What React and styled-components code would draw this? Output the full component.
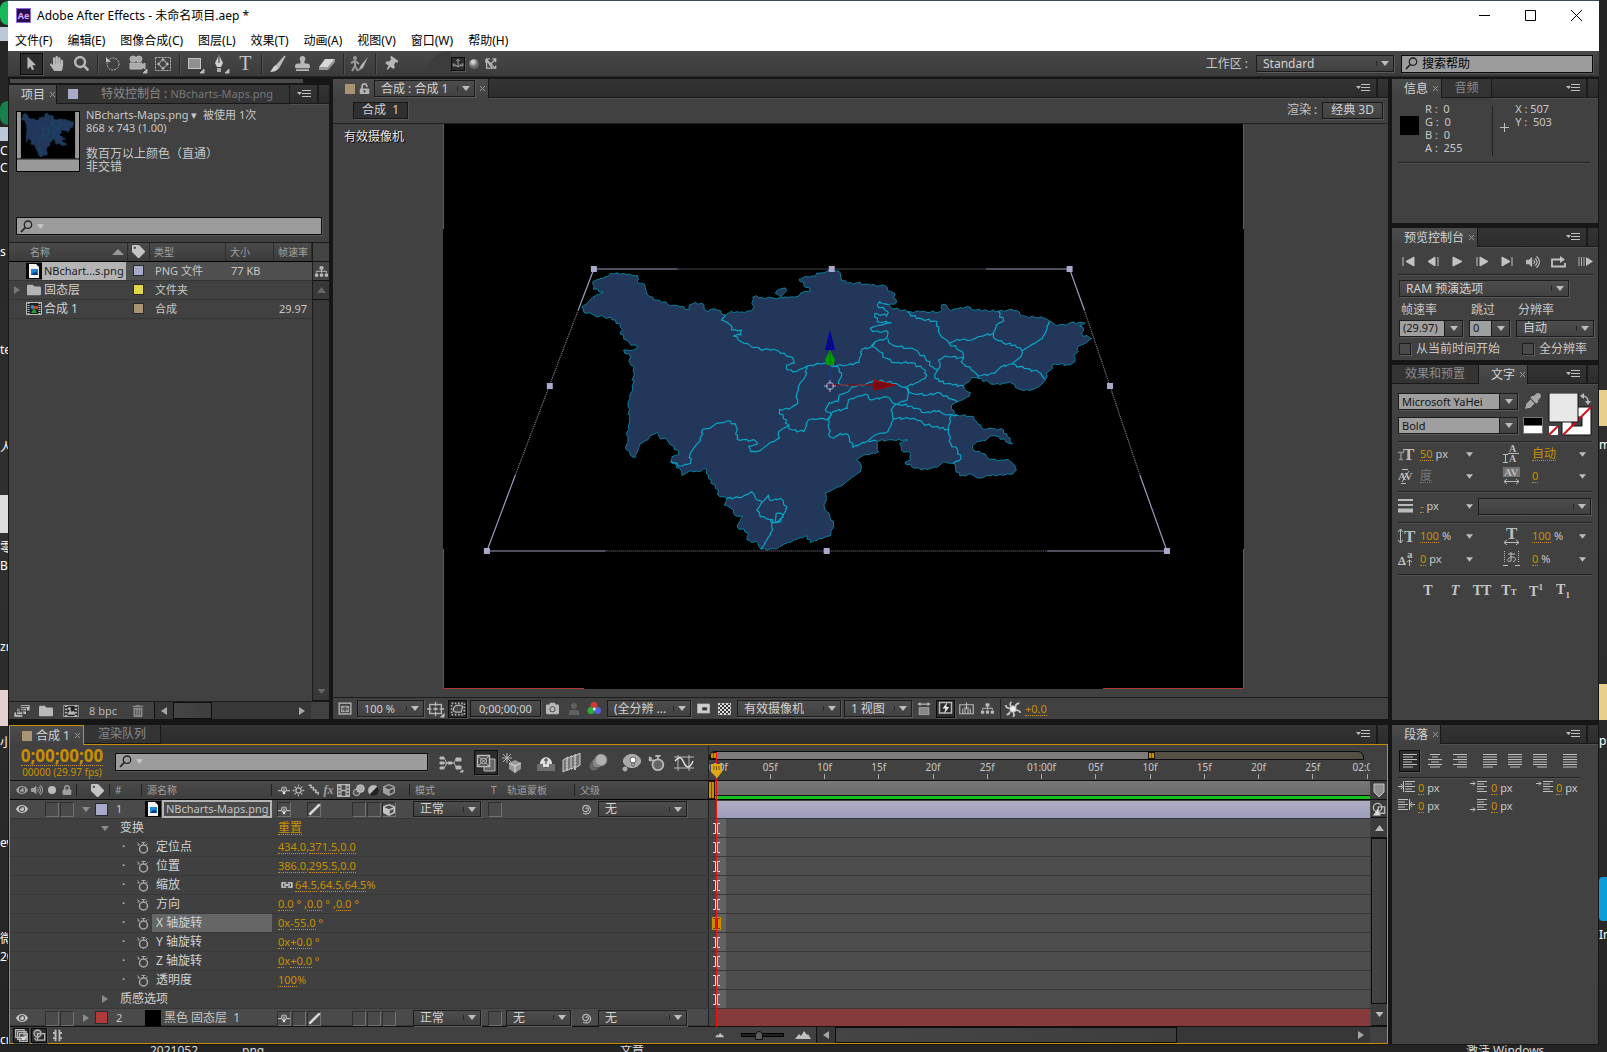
import styled, {createGlobalStyle, css} from 'styled-components'
import {
  FaCamera, FaCube, FaEraser, FaEye, FaEyeDropper, FaFolder, FaHandPaper, FaLock,
  FaMousePointer, FaPaintBrush, FaSearch, FaSitemap, FaStamp, FaTag, FaThumbtack,
  FaTrashAlt, FaUnlockAlt, FaUser, FaVolumeUp,
} from 'react-icons/fa'

const GlobalStyle = createGlobalStyle`
  * { box-sizing: border-box; }
  body { margin: 0; background: #292929; }
  body, button, input, select {
    font-family: "Noto Sans", "Noto Sans CJK SC", sans-serif;
    font-size: 11px;
    line-height: 14px;
    color: #c8c8c8;
  }
  button, input, select { margin: 0; padding: 0; border: 0; border-radius: 0; background: none; }
  svg { display: block; flex: none; }
`

const gold = '#c89000'
const raised = 'linear-gradient(#4d4d4d, #414141)'

// ---------- desktop and window ----------

const Desktop = styled.div`
  display: grid;
  grid-template-columns: 8px minmax(0, 1fr) 8px;
  grid-template-rows: minmax(0, 1fr) 7px;
  height: 100vh;
  overflow: hidden;
  background: linear-gradient(#232323, #303030 50%, #242424);
`

const Edge = styled.div`
  display: flex;
  flex-direction: column;
  overflow: hidden;
  color: #fff;
  font-size: 12px;
  white-space: nowrap;
`

const EdgeItem = styled.span`
  flex: none;
  height: ${p => p.$h || 18}px;
  margin-top: ${p => p.$gap}px;
  background: ${p => p.$bg || 'none'};
  border-radius: ${p => p.$round || 0};
`

const EdgeBottom = styled.div`
  grid-column: 1 / -1;
  display: grid;
  grid-template-columns: 150px 92px 378px 846px 1fr;
  overflow: hidden;
  color: #ddd;
  font-size: 12px;
  line-height: 12px;
  white-space: nowrap;
`

const Window = styled.main`
  display: flex;
  flex-direction: column;
  min-width: 0;
  border-top: 1px solid #3a4a50;
  background: #161616;
`

const TitleBar = styled.header`
  display: flex;
  align-items: center;
  height: 29px;
  padding: 0 8px;
  gap: 6px;
  background: #fff;
  color: #000;
  font-size: 12px;
`

const AppBadge = styled.span`
  width: 15px;
  height: 15px;
  border: 1px solid #8f6fd8;
  background: #2a0b4b;
  color: #d5a6ff;
  font-size: 9px;
  font-weight: bold;
  line-height: 13px;
  text-align: center;
`

const WindowButtons = styled.div`
  display: flex;
  gap: 35px;
  margin-left: auto;
  padding-right: 9px;
`

const PlainButton = styled.button`
  display: flex;
  align-items: center;
  justify-content: center;
  color: inherit;
`

const MenuBar = styled.nav`
  display: flex;
  align-items: center;
  height: 21px;
  padding: 0 7px;
  gap: 15px;
  background: #fff;

  button { color: #000; font-size: 12px; }
`

// ---------- shared controls ----------

const DropBox = styled.div`
  display: flex;
  align-items: center;
  flex: ${p => (p.$w ? 'none' : 1)};
  width: ${p => (p.$w ? p.$w + 'px' : 'auto')};
  height: ${p => p.$h || 17}px;
  border: 1px solid #1c1c1c;
  box-shadow: 1px 1px 0 #5a5a5a;
  background: ${raised};
  min-width: 0;

  select {
    appearance: none;
    flex: 1;
    min-width: 0;
    height: 100%;
    padding-left: ${p => (p.$light ? 3 : 6)}px;
    color: ${p => (p.$light ? '#161616' : '#d2d2d2')};
    background: ${p => (p.$light ? '#9f9f9f' : 'none')};
    border-right: ${p => (p.$light ? '1px solid #1c1c1c' : 0)};
    font-size: ${p => p.$font || 12}px;
  }
`

const ArrowCell = styled.span`
  display: flex;
  justify-content: center;
  flex: none;
  width: 17px;
  border-left: ${p => (p.$light ? 0 : '1px solid #262626')};
`

const Down = ({w = 8, fill = '#bdbdbd'}) => (
  <svg width={w} height="5" viewBox="0 0 8 5"><path d="M0 0h8L4 5z" fill={fill} /></svg>
)

const Side = ({fill = '#a8a8a8', left}) => (
  <svg width="6" height="8" viewBox="0 0 6 8"><path d={left ? 'M6 0v8L0 4z' : 'M0 0v8l6-4z'} fill={fill} /></svg>
)

const Drop = ({value, label, w, h, light, font}) => (
  <DropBox $w={w} $h={h} $light={light} $font={font}>
    <select aria-label={label} defaultValue={value}><option>{value}</option></select>
    <ArrowCell $light={light}><Down /></ArrowCell>
  </DropBox>
)

const SearchBox = styled.label`
  display: flex;
  align-items: center;
  flex: ${p => (p.$w ? 'none' : 1)};
  width: ${p => (p.$w ? p.$w + 'px' : 'auto')};
  height: 18px;
  margin: ${p => p.$margin || 0};
  padding-left: 3px;
  gap: 4px;
  border: 1px solid #0c0c0c;
  box-shadow: 1px 1px 0 #555;
  background: #9c9c9c;

  input { flex: 1; min-width: 0; color: #000; font-size: 12px; }
  input::placeholder { color: #000; opacity: 1; }
`

const Lens = () => (
  <svg width="13" height="13" viewBox="0 0 13 13" fill="none" stroke="#222">
    <circle cx="8" cy="4.7" r="3.7" strokeWidth="1.3" /><path d="M5.3 7.5L1 12" strokeWidth="1.8" />
  </svg>
)

const Search = ({label, placeholder, arrow, w, margin}) => (
  <SearchBox $w={w} $margin={margin}>
    <Lens />
    {arrow && <Down fill="#c8c8c8" w={7} />}
    <input aria-label={label} placeholder={placeholder} />
  </SearchBox>
)

const Value = styled.button`
  color: ${p => (p.$dim ? '#777' : gold)};
  border-bottom: 1px dotted ${p => (p.$dim ? '#777' : gold)};
  font-size: ${p => p.$size || 11}px;
  line-height: 13px;
`

const IconButton = styled.button`
  display: flex;
  flex: none;
  align-items: center;
  justify-content: center;
  width: ${p => p.$w || 22}px;
  height: ${p => p.$h || 18}px;
  color: #b8b8b8;
  ${p => p.$on && css`
    border: 1px solid #0c0c0c;
    background: #2c2c2c;
    box-shadow: 1px 1px 0 #555;
  `}
`

const Swatch = styled.span`
  flex: none;
  width: ${p => p.$s || 10}px;
  height: ${p => p.$s || 10}px;
  background: ${p => p.$c};
  border: ${p => (p.$edge ? '1px solid #2a2a2a' : 0)};
  border-radius: ${p => (p.$round ? '50%' : 0)};
`

const Grip = styled.span`
  flex: none;
  width: 4px;
  height: 11px;
  background-image: radial-gradient(circle, #7c7c7c 30%, transparent 40%);
  background-size: 2px 2px;
`

// ---------- panels ----------

const Panel = styled.section`
  display: flex;
  flex-direction: column;
  min-width: 0;
  flex: ${p => (p.$grow ? 1 : 'none')};
  height: ${p => (p.$h ? p.$h + 'px' : 'auto')};
  min-height: 0;
  background: #414141;
`

const TabStrip = styled.div`
  display: flex;
  flex: none;
  height: 19px;
  background: linear-gradient(#343434, #2c2c2c);
`

const Tab = styled.div`
  display: flex;
  align-items: center;
  flex: none;
  gap: ${p => p.$gap || 4}px;
  width: ${p => (p.$w ? p.$w + 'px' : 'auto')};
  padding: 0 4px;
  white-space: nowrap;
  font-size: 12px;
  color: ${p => (p.$on ? '#d4d4d4' : '#8c8c8c')};
  background: ${p => (p.$on ? 'linear-gradient(#4c4c4c, #414141)' : '#343434')};
  border: solid #191919;
  border-width: 0 1px 0 0;
  border-bottom-width: ${p => (p.$on ? 0 : 1)}px;
  ${p => p.$active && css`
    border: 1px solid ${gold};
    border-bottom: 0;
    margin-bottom: -1px;
    z-index: 1;
  `}
`

const TabButton = styled.button`
  color: inherit;
  font-size: 12px;
  flex: ${p => (p.$fill ? 1 : 'none')};

  small { font-size: 11px; color: #787878; }
`

const Close = () => (
  <PlainButton aria-label="关闭">
    <svg width="7" height="7" viewBox="0 0 7 7"><path d="M1 1l5 5M6 1L1 6" stroke="#999" /></svg>
  </PlainButton>
)

const TabRest = styled.div`
  display: flex;
  align-items: center;
  justify-content: flex-end;
  flex: 1;
  border-bottom: ${p => (p.$flat ? 0 : '1px solid #1b1b1b')};
  box-shadow: ${p => (p.$flat ? 'none' : '0 1px 0 #505050')};
`

const GripCell = styled.span`
  display: flex;
  align-items: center;
  justify-content: center;
  width: 12px;
  height: 100%;
  border-left: 2px solid #1b1b1b;
`

const TabEnd = ({flat}) => (
  <TabRest $flat={flat}>
    <IconButton $w={26} aria-label="面板菜单">
      <svg width="14" height="9" viewBox="0 0 14 9">
        <path d="M0 2h5L2.500 5z" fill="#c0c0c0" />
        <path d="M5 .5h9M5 3.500h9M5 6.500h9" stroke="#c0c0c0" />
      </svg>
    </IconButton>
    <GripCell><Grip /></GripCell>
  </TabRest>
)

const Divider = styled.hr`
  width: auto;
  height: 2px;
  margin: ${p => p.$m || '0 6px'};
  border: 0;
  background: #222;
  border-bottom: 1px solid #505050;
`

// ---------- toolbar ----------

const Toolbar = styled.div`
  display: flex;
  align-items: center;
  flex: none;
  height: 26px;
  padding-left: 4px;
  background: linear-gradient(#484848, #3b3b3b);
  border-bottom: 1px solid #262626;
`

const Tool = styled(IconButton)`
  width: 23px;
  height: 22px;
  margin: 0 1px;
`

const ToolSep = styled.span`
  width: 2px;
  height: 20px;
  margin: 0 2px 0 3px;
  background: #272727;
  border-right: 1px solid #505050;
`

const ToolLabel = styled.span`
  margin-left: auto;
  padding-right: 8px;
  font-size: 12px;
`

const ToolCurve = styled.span`
  width: 47px;
`

const Tilt = styled.span`
  transform: rotate(35deg);
`

const Corner = <path d="M19 15v4h-4z" fill="#bbb" />

const Svg = ({children, s = 20, w, vb}) => (
  <svg width={w || s} height={s} viewBox={vb || '0 0 20 20'} fill="none" stroke="#b8b8b8">{children}</svg>
)

const glyphs = {
  rotate: <Svg><circle cx="10" cy="10" r="6" strokeDasharray="2 1" /><path d="M3 3v5h5z" fill="#bbb" stroke="none" /></Svg>,
  movie: <Svg><circle cx="5" cy="5" r="3" fill="#aaa" /><circle cx="11" cy="5" r="3" fill="#aaa" /><path d="M2 9h12v6H2zM14 11l3-2v6l-3-2z" fill="#aaa" />{Corner}</Svg>,
  anchor: <Svg><rect x="2.500" y="3.500" width="15" height="13" strokeDasharray="2 1" /><circle cx="10" cy="10" r="3.500" /><path d="M10 4l2 2H8zM10 16l2-2H8zM4 10l2-2v4zM16 10l-2-2v4z" fill="#bbb" stroke="none" /></Svg>,
  rect: <Svg><rect x="3.500" y="4.500" width="12" height="10" fill="#909090" stroke="#c4c4c4" />{Corner}</Svg>,
  pen: <Svg><path d="M9 1l4 8-2 4H7L5 9z" fill="#d0d0d0" stroke="none" /><path d="M7 14h4v4H7z" fill="#aaa" stroke="none" /><path d="M9 2v7" stroke="#333" />{Corner}</Svg>,
  brush: <Svg><path d="M18 2l-8 9 2 2z" fill="#bbb" strokeWidth="1.500" /><path d="M9 11l3 3c-2 3-6 4-9 4 2-2 3-6 6-7z" fill="#d0d0d0" stroke="none" /></Svg>,
  eraser: <Svg><path d="M8 5h10l-7 8H2z" fill="#d8d8d8" stroke="none" /><path d="M2 13h9v3H2zM11 13l7-8v3l-7 8z" fill="#999" stroke="none" /></Svg>,
  roto: <Svg><circle cx="6" cy="4" r="2" fill="#999" stroke="none" /><path d="M2 9l4-2 4 3M6 7v5l-3 5M6 12l3 5" strokeWidth="2" stroke="#999" /><path d="M19 3l-7 8-3 6 5-3z" fill="#b0b0b0" stroke="none" /></Svg>,
  axes: <Svg s={12}><path d="M10 3v12M4 10l6 5 6-5M7 5l3-3 3 3M2 9v4h4M18 9v4h-4" strokeWidth="1.500" /></Svg>,
  ball: <svg width="12" height="12" viewBox="0 0 12 12"><defs><radialGradient id="ball" cx=".4" cy=".3"><stop offset="0" stopColor="#eee" /><stop offset="1" stopColor="#666" /></radialGradient></defs><circle cx="6" cy="6" r="5" fill="url(#ball)" /></svg>,
  viewAxis: <Svg s={13}><path d="M4 5v12h9zM3 3h6M3 3v6M4 4l12 12M18 3L8 13M13 3h5v5M14 17h4v-4" strokeWidth="2" /></Svg>,
  film: <Svg s={16}><rect x="1" y="3" width="18" height="14" fill="#222" /><path d="M4 3v14M16 3v14" strokeDasharray="2 2" strokeWidth="3" /><path d="M6 14l3-5 2 3 2-2 2 4z" fill="#bbb" /><circle cx="8" cy="7" r="1.500" fill="#bbb" /></Svg>,
  importer: <Svg s={18}><path d="M8 3h11v7H8zM4 7h11v7H4zM1 11h10v6H1z" fill="#c0c0c0" stroke="#333" /><path d="M9 5h8M5 9h8" stroke="#333" /></Svg>,
  region: <Svg s={18}><rect x="3.500" y="3.500" width="13" height="12" strokeWidth="1.500" /><path d="M6 7h8v6H6z" fill="#888" /><path d="M6 10h8M10 7v6" stroke="#444" /></Svg>,
  guides: <Svg s={18}><rect x="3" y="5" width="13" height="10" strokeWidth="1.500" /><path d="M9.500 2v5M9.500 13v5M0 10h5M14 10h5M7 10h5M9.500 8v4" strokeWidth="1.500" />{Corner}</Svg>,
  mask: <Svg s={16}><path d="M2 3h16v14H2z" strokeDasharray="2 2" strokeWidth="2" /><path d="M4 12c0-8 9-8 12-5l-2 7H7z" fill="#444" strokeWidth="1.500" /></Svg>,
  rgb: <svg width="15" height="15" viewBox="0 0 15 15"><circle cx="7" cy="4.500" r="3.500" fill="#d03a30" /><circle cx="4" cy="9.500" r="3.500" fill="#2fae36" /><circle cx="10.500" cy="9.500" r="3.500" fill="#5560d8" /><circle cx="7.300" cy="8" r="1.500" fill="#ddd" /></svg>,
  inset: <Svg s={15}><rect x="2" y="4" width="16" height="12" fill="#d0d0d0" /><rect x="8" y="8" width="7" height="5" fill="#333" /></Svg>,
  checker: <svg width="13" height="12"><defs><pattern id="chk" width="4" height="4" patternUnits="userSpaceOnUse"><rect width="4" height="4" fill="#333" /><path d="M0 0h2v2H0zM2 2h2v2H2z" fill="#ddd" /></pattern></defs><rect width="13" height="12" fill="url(#chk)" stroke="#ccc" /></svg>,
  ratio: <Svg s={14}><path d="M2 3h16M5 1L2 3l3 2M15 1l3 2-3 2" strokeWidth="1.500" /><path d="M3 8h14v10H3z" fill="#888" /></Svg>,
  bolt: <Svg s={15}><path d="M2 2h16v14H2z" strokeWidth="2" /><path d="M12 2L6 10h4l-2 7 7-9h-4z" fill="#eee" stroke="none" /></Svg>,
  graph: <Svg s={15}><path d="M1 5h18v12H1z" strokeWidth="1.500" /><path d="M5 17v-7M8 17V8M12 17V8M15 17v-7M10 2v9" strokeWidth="1.500" /></Svg>,
  shutter: <Svg s={16}><circle cx="10" cy="10" r="4" fill="#eee" /><path d="M8 7c-2-2-2-4 0-6M13 8c0-3 2-5 5-5M14 12c3-1 5 1 5 3M10 14c2 2 2 4 0 6M6 13c0 3-2 4-4 4M6 9C3 9 1 8 1 5" strokeWidth="2" stroke="#ccc" /></Svg>,
  flow: <Svg w={25} vb="0 0 25 20"><path d="M1 4h4v2H1zM1 9h4v2H1zM1 14h4v2H1zM17 5h5v3h-5zM17 13h5v3h-5z" fill="#b8b8b8" /><path d="M5 5l3 5h7l2-4M5 15l3-5H5M15 10l2 4" /><path d="M9 9h4v2H9z" fill="#b8b8b8" /><path d="M24 17v2h-3z" fill="#bbb" /></Svg>,
  liveUpdate: <Svg><path d="M8 6h11v12H8z" fill="#666" /><path d="M1.500 2.500h12v11h-12z" fill="#444" strokeWidth="1.500" /><circle cx="7.500" cy="8" r="3" /><path d="M2 3l11 10M13 3L2 13" /></Svg>,
  draft: <Svg><path d="M5 0v10M0 5h10M1 1l8 8M9 1L1 9" /><path d="M13 7l6 3v6l-6 4-6-4v-6z" fill="#999" stroke="none" /><path d="M7 10l6 3 6-3M13 13v7" stroke="#ddd" /></Svg>,
  shy: <Svg><path d="M1 11h18v7H1z" fill="#6e6e6e" stroke="none" /><path d="M4 11c0-9 12-9 12 0z" fill="#ddd" stroke="none" /><path d="M10 5v10M8 7h4" stroke="#333" /><path d="M7 11h6v3H7z" fill="#ddd" stroke="none" /></Svg>,
  blend: <Svg>{[0, 4, 8, 12].map(n => <path key={n} d={`M${n + 1} ${7 - n / 3}l5-3v12l-5 3z`} fill="#777" stroke="#ccc" />)}<path d="M13 3v14M5 6v10" strokeDasharray="2 1" strokeWidth="2" /></Svg>,
  blur: <Svg><circle cx="6" cy="13" r="5" fill="#666" stroke="#444" /><circle cx="9" cy="10" r="5" fill="#888" stroke="#555" /><circle cx="13" cy="7" r="6" fill="#b0b0b0" stroke="#777" /></Svg>,
  brain: <Svg><ellipse cx="11" cy="8" rx="8.500" ry="6.500" fill="#a8a8a8" /><circle cx="4" cy="16" r="2" fill="#aaa" /><circle cx="12" cy="7" r="3" fill="#fff" stroke="#666" /><path d="M11 10h2v3h-2z" fill="#fff" stroke="#555" /></Svg>,
  watch: <Svg s={18}><circle cx="11" cy="12" r="6" strokeWidth="2" fill="#666" /><path d="M11 6V2M8 2h6M4 4L1 7M2 3v4h5" strokeWidth="2" /></Svg>,
  curve: <Svg w={22}><path d="M0 4h20M0 15h20M4 2v16M15 2v16" /><path d="M1 8c5-6 7-3 9 2s6 6 9-2" stroke="#ddd" strokeWidth="1.500" /></Svg>,
  shySmall: <Svg s={12}><path d="M0 11h5M15 11h5" strokeWidth="2" /><circle cx="10" cy="9" r="4" strokeWidth="2" /><path d="M8 13h4v4H8z" fill="#ddd" stroke="none" /><path d="M10 7v5" strokeWidth="2" /></Svg>,
  sun: <Svg s={13}><circle cx="10" cy="10" r="4" strokeWidth="2" /><path d="M10 1v3M10 16v3M1 10h3M16 10h3M4 4l2 2M14 14l2 2M16 4l-2 2M4 16l2-2" strokeWidth="2" /></Svg>,
  quality: <Svg s={12}><path d="M1 2h4v4h4v4h4v4h4v4" strokeWidth="2.500" /></Svg>,
  slash: <Svg s={13}><path d="M2 18L18 2" strokeWidth="4" stroke="#d8d8d8" /></Svg>,
  frames: <Svg s={13}><path d="M1 1h18v18H1zM6 1v18M14 1v18M6 10h8" strokeWidth="2" /><path d="M3.500 1v18M16.500 1v18" strokeWidth="3" strokeDasharray="3 2" /></Svg>,
  half: <Svg s={13}><circle cx="10" cy="10" r="8" fill="#bbb" /><path d="M4 16A8 8 0 0 0 16 4z" fill="#222" stroke="none" /></Svg>,
  spiral: <Svg s={12}><path d="M10 10c0-3 4-2 4 1s-5 5-8 2-1-9 4-9 9 5 7 10-8 5-12 3" strokeWidth="2" /></Svg>,
  link: <Svg s={14}><path d="M9 7H3v6h6M11 7h6v6h-6M6 10h8" strokeWidth="2" stroke="#ddd" /></Svg>,
  marker: <svg width="12" height="15" viewBox="0 0 12 15"><path d="M1 1h10v8l-5 5-5-5z" fill="#909090" stroke="#c4c4c4" /></svg>,
  shapes: <Svg s={14}><circle cx="8" cy="8" r="6" strokeWidth="2" /><path d="M9 7h9v9H9z" strokeWidth="2" /><path d="M2 19l6-9 4 9z" fill="#ddd" /></Svg>,
  layers: <Svg s={13}><path d="M1 1h13v12H1zM4 4h13v12H4zM7 7h12v12H7z" fill="#444" strokeWidth="1.800" /><path d="M10 12l3 4 4-5" stroke="#eee" strokeWidth="2" /></Svg>,
  modes: <Svg s={13}><circle cx="7" cy="7" r="5.500" strokeWidth="2" fill="#555" /><path d="M7 7h11v10H7z" strokeWidth="2" /><path d="M2 14l4 4" strokeWidth="2" /></Svg>,
  braces: <Svg s={13}><path d="M7 1v18M13 1v18M3 6h4v8H3M17 6h-4v8h4" strokeWidth="3" /></Svg>,
}

const picture = (
  <svg width="16" height="16" viewBox="0 0 16 16">
    <path d="M0 0h16v16H0z" fill="#050505" />
    <path d="M3 1h7l3 3v11H3z" fill="#f4f4f4" />
    <path d="M5 6h7v6H5z" fill="#1f8ad8" /><path d="M5 12l3-3 1 1 1-2 2 4z" fill="#0a3a80" />
  </svg>
)

const compIcon = (
  <svg width="16" height="13" viewBox="0 0 16 13">
    <path d="M.5.5h15v12H.5z" fill="#222" stroke="#bbb" />
    <path d="M2.500 1v11M13.500 1v11" stroke="#bbb" strokeWidth="2" strokeDasharray="1 1" />
    <circle cx="6.500" cy="5" r="2" fill="#1c8ee0" /><path d="M8 4h4v3H8z" fill="#d04020" /><path d="M8 6l3 5H5z" fill="#22a030" />
  </svg>
)

const toolGroups = [
  [['选择', <FaMousePointer size={13} />, true], ['手形', <FaHandPaper size={15} />], ['缩放', <FaSearch size={15} />]],
  [['旋转', glyphs.rotate], ['摄像机', glyphs.movie], ['轴心点', glyphs.anchor]],
  [['矩形遮罩', glyphs.rect], ['钢笔', glyphs.pen], ['文字', null]],
  [['画笔', glyphs.brush], ['图章', <FaStamp size={15} />], ['橡皮擦', glyphs.eraser]],
  [['Roto 笔刷', glyphs.roto]],
  [['木偶', <Tilt><FaThumbtack size={14} /></Tilt>]],
]

const BigT = styled.span`
  font: 20px "Liberation Serif", serif;
  color: #c4c4c4;
`

const ToolbarRow = () => (
  <Toolbar>
    <Grip />
    <span>&nbsp;</span>
    {toolGroups.map((group, i) => [
      i > 0 && <ToolSep key={'s' + i} />,
      ...group.map(([name, icon, on]) => (
        <Tool key={name} aria-label={name} $on={on}>{icon || <BigT>T</BigT>}</Tool>
      )),
    ])}
    <ToolCurve>
      <svg width="47" height="25" viewBox="0 0 56 25" preserveAspectRatio="none"><path d="M0 25C35 25 25 1 56 0v25z" fill="#3c3c3c" /></svg>
    </ToolCurve>
    <IconButton $w={14} $h={14} $on aria-label="本地轴">{glyphs.axes}</IconButton>
    <IconButton $w={18} aria-label="世界轴">{glyphs.ball}</IconButton>
    <IconButton $w={16} aria-label="视图轴">{glyphs.viewAxis}</IconButton>
    <ToolLabel>工作区 :</ToolLabel>
    <Drop label="工作区" value="Standard" w={138} />
    <Search label="搜索帮助" placeholder="搜索帮助" w={192} margin="0 6px 0 7px" />
  </Toolbar>
)

// ---------- map ----------

const outline = '246,95 262,86 278,80 285,70 300,68 318,74 343,76 345,88 342,94 352,100 360,112 362,125 370,140 378,150 404,155 410,164 430,167 455,178 456,165 470,157 488,165 490,180 497,186 500,179 515,180 535,195 548,184 565,187 590,184 597,170 592,160 594,142 602,137 615,143 640,144 662,145 664,140 680,140 694,138 699,128 720,123 716,112 706,108 704,96 695,87 712,80 730,80 733,70 748,68 765,58 785,70 788,92 800,100 820,99 850,106 882,108 887,122 904,132 900,145 907,158 890,165 895,172 930,185 958,186 1000,186 1008,178 1005,165 1015,165 1022,180 1040,176 1060,170 1080,180 1105,182 1128,184 1150,180 1170,182 1176,195 1195,204 1203,198 1215,204 1225,203 1240,213 1252,224 1275,225 1285,218 1318,219 1305,228 1315,240 1310,252 1332,266 1315,282 1302,290 1303,305 1293,315 1296,335 1285,345 1262,343 1245,345 1247,355 1236,365 1232,388 1222,405 1205,418 1185,421 1170,415 1165,403 1155,395 1140,400 1120,403 1085,385 1070,382 1065,395 1053,405 1055,418 1068,428 1065,440 1040,455 1027,465 1026,478 1040,495 1075,500 1080,512 1090,525 1097,538 1115,536 1140,540 1148,560 1160,582 1145,575 1130,560 1112,558 1100,572 1082,575 1072,588 1080,605 1100,612 1108,628 1135,630 1150,628 1160,640 1168,660 1160,672 1110,677 1088,684 1070,673 1045,678 1036,655 1030,640 1010,635 995,652 960,660 940,650 925,638 938,630 938,610 918,600 914,580 932,570 900,570 862,572 865,588 868,605 850,613 835,615 820,630 830,645 828,665 810,682 790,705 770,718 752,728 754,745 750,770 762,800 770,825 762,858 740,865 720,878 712,857 690,868 660,884 645,897 612,898 605,880 582,870 585,850 560,830 567,812 572,798 558,798 552,780 532,765 537,745 522,740 512,705 503,700 497,675 488,655 478,665 460,662 440,676 435,655 415,635 418,620 432,615 430,600 415,585 408,570 390,560 386,547 370,558 365,570 348,580 345,595 338,622 328,615 318,598 322,570 320,555 326,515 323,455 332,415 336,350 325,335 328,322 313,300 335,300 343,293 325,278 305,252 310,238 295,210 270,200 250,197 225,183 222,170 235,158 245,142 268,126 247,118 246,95'

const island = '648,120 665,114 668,122 655,140 643,130 648,120'

const borders = [
  '535,195 526,210 545,225 548,240 570,240 568,255 552,258 575,280 600,292 610,298 640,298 655,310 680,322 684,340 668,345 670,360 690,364 712,348 740,342 762,335 770,347 800,345 825,338 832,298 850,292 860,275 885,265 888,245 855,245 850,235 870,225 895,218 865,215 860,190 885,198 888,185 865,165 870,155 890,165',
  '712,348 708,380 695,405 690,430 692,460 672,478 652,478 652,492 668,510 665,520 680,540 705,545 715,510 740,505 755,510 765,495 752,480 760,458 780,455 782,435 802,425 810,410 840,403 860,390 880,395 905,400 925,412',
  '672,525 650,545 652,565 630,580 610,602 590,605 585,588 605,582 600,572 560,568 558,530 545,513 530,518 515,520 500,535 485,538 480,570 468,590 458,610 458,640 440,648 415,635',
  '762,345 782,355 787,380 780,400 802,410',
  '860,275 855,290 870,305 885,325 905,338 940,338 970,360 970,385 950,398 925,412',
  '888,265 890,278 910,290 945,298 970,325 985,350 998,358',
  '930,185 950,205 995,215 998,245 1010,265 1022,280 1050,305 1053,325 1015,318 998,330 1002,350 990,375 1000,395 1030,405 1053,408',
  '1128,184 1140,212 1125,225 1118,250 1085,260 1070,270 1040,268 1022,280',
  '1240,213 1235,235 1225,265 1195,290 1180,303 1165,285 1140,280 1118,262 1118,250',
  '1180,303 1178,320 1158,342 1135,350 1120,370 1085,378',
  '1158,342 1185,355 1215,365 1230,388',
  '1053,325 1048,335 1070,360 1085,378 1085,385',
  '925,412 933,430 930,450 905,462 895,480 900,510 888,545 860,555 845,572 812,592 802,555 785,550 770,565 762,560 758,510 768,485 800,475 802,450 840,432 850,450 885,440 905,462',
  '925,412 940,430 975,435 1000,428 1020,445 1040,455',
  '905,462 940,468 970,488 1000,482 1015,495 1040,495',
  '900,505 945,505 965,520 1000,535 1020,538',
  '1026,495 1020,538 1025,580 1040,600 1047,628 1030,640',
  '537,745 570,742 592,725 600,745 615,755 603,780 610,800 630,808 645,818 660,800 668,770 655,745 632,752 628,735 617,755',
  '645,790 660,795 655,815 643,812 645,790',
  '632,810 637,840 625,870 612,898',
  '845,572 862,572',
]

const px = x => 37 + x * 0.4592
const py = y => 126 + y / 3

// split every segment and nudge the new points, so the borders look surveyed
const trace = text => {
  const points = text.split(' ').map(s => s.split(',').map(Number)).map(([x, y]) => [px(x), py(y)])
  const out = [points[0]]
  points.slice(1).forEach(([x, y], i) => {
    const [x0, y0] = points[i]
    const steps = Math.max(1, Math.round(Math.hypot(x - x0, y - y0) / 3))
    for (let n = 1; n <= steps; n++) {
      const t = n / steps
      const k = n === steps ? 0 : Math.sin((x0 + y0) * 7 + n * 2.4) * 1.1
      out.push([x0 + (x - x0) * t + k, y0 + (y - y0) * t - k])
    }
  })
  return 'M' + out.map(p => p.map(v => v.toFixed(1)).join(' ')).join('L')
}

const landPath = trace(outline) + trace(island)
const borderPath = borders.map(trace).join('')

const Land = () => (
  <g strokeLinejoin="round">
    <path d={landPath} fill="#22375a" stroke="#0b7f9a" />
    <path d={borderPath} fill="none" stroke="#0ba6c6" strokeWidth="1.2" />
  </g>
)

const handles = [[248, 57], [766, 57], [1284, 57], [152, 408], [1372, 408], [15, 903], [755, 903], [1496, 903]]

const edges = [
  [248, 57, 430, 57, 1], [430, 57, 1102, 57, 0], [1102, 57, 1284, 57, 1],
  [15, 903, 273, 903, 1], [273, 903, 1235, 903, 0], [1235, 903, 1496, 903, 1],
  [248, 57, 214, 180, 1], [214, 180, 77, 675, 0], [77, 675, 15, 903, 1],
  [1284, 57, 1316, 180, 1], [1316, 180, 1437, 675, 0], [1437, 675, 1496, 903, 1],
]

const CanvasSvg = styled.svg`
  width: 100%;
  height: auto;
  max-height: 100%;
  background: #000;
`

const Canvas = () => (
  <CanvasSvg viewBox="0 0 801 565">
    <Land />
    {edges.map(([a, b, c, d, solid]) => (
      <line key={`${a}-${b}-${c}-${d}`} x1={px(a)} y1={py(b)} x2={px(c)} y2={py(d)}
        stroke={solid ? '#9c9cbe' : '#85859c'} strokeWidth="1.2" strokeDasharray={solid ? 'none' : '1 1'} />
    ))}
    {handles.map(([x, y]) => <rect key={`${x}-${y}`} x={px(x) - 3} y={py(y) - 3} width="6" height="6" fill="#a9a9cc" />)}
    <g transform="translate(387 262)" fill="none">
      <path d="M0-22V0" stroke="#173c96" />
      <path d="M0-56l5 20h-10z" fill="#0000a8" />
      <path d="M-2-38l2-10 2 10z" stroke="#14145c" />
      <path d="M0-36l5 10-2 5h-6l-2-5z" fill="#00a000" />
      <path d="M0-34v12" stroke="#056b05" />
      <path d="M0-1h44" stroke="#a00000" />
      <path d="M44-6l21 5-21 5z" fill="#7a0a12" stroke="#a80000" />
      <circle r="3.500" stroke="#a9a9cc" /><path d="M-6 0h4M2 0h4M0-6v4M0 2v4" stroke="#a9a9cc" />
    </g>
    <path d="M.5 0v105M.5 425v139.500H141M660 564.500h140.500V425M800.500 0v105" fill="none" stroke="#b03a3a" />
  </CanvasSvg>
)

// ---------- project panel ----------

const Workspace = styled.div`
  display: grid;
  grid-template-columns: minmax(0, 1fr) 206px;
  gap: 4px;
  flex: 1;
  min-height: 0;
  padding: 2px 1px 1px;
`

const MainColumn = styled.div`
  display: flex;
  flex-direction: column;
  gap: 6px;
  min-width: 0;
`

const TopRow = styled.div`
  display: grid;
  grid-template-columns: 320px minmax(0, 1fr);
  gap: 4px;
  flex: 1;
  min-height: 0;
`

const ProjectColumn = styled.div`
  display: flex;
  flex-direction: column;
  gap: 2px;
  min-height: 0;
`

const PanelScroller = styled.div`
  height: 4px;
  margin: 0 26px 0 1px;
  background: #4a4a4a;
`

const Footage = styled.div`
  display: flex;
  gap: 6px;
  height: 113px;
  padding: 7px;
`

const Thumb = styled.svg`
  width: 64px;
  height: 61px;
  border: 1px solid #000;
  background: #999;
`

const FootageText = styled.div`
  display: flex;
  flex-direction: column;
  padding-bottom: 13px;

  span {
    height: 13px;
    line-height: 13px;
    white-space: pre;
    font-size: ${p => p.$size || 11}px;
  }
`

const FootageInfo = styled.div`
  margin-top: -3px;
`

const ListArea = styled.div`
  display: flex;
  flex: 1;
  min-height: 0;
  margin-top: 7px;
  border-top: 1px solid #1c1c1c;
`

const ListTableWrap = styled.div`
  flex: 1;
`

const ListTable = styled.table`
  width: 100%;
  table-layout: fixed;
  border-collapse: collapse;

  th {
    height: 18px;
    padding: 0 4px;
    font-size: 10px;
    font-weight: normal;
    text-align: left;
    color: #a0a0a0;
    background: linear-gradient(#4a4a4a, #3c3c3c);
    border-bottom: 1px solid #000;
    box-shadow: inset -1px 0 #2c2c2c;
  }

  td {
    height: 19px;
    padding: 0 6px 0 5px;
    white-space: nowrap;
    border-bottom: 1px solid #363636;
  }
`

const ItemRow = styled.tr`
  background: ${p => (p.$on ? '#4f4f4f' : 'none')};
`

const ItemName = styled.div`
  display: flex;
  align-items: center;
  height: 18px;
  margin: 0 -6px 0 -5px;
  font-size: 12px;
`

const ItemLabel = styled.span`
  padding: 0 2px;
  font-size: ${p => (p.$on ? 11 : 12)}px;
  line-height: 18px;
  color: ${p => (p.$on ? '#1c1c1c' : '#d2d2d2')};
  background: ${p => (p.$on ? '#b4b4b4' : 'none')};
`

const Slot = styled.span`
  display: flex;
  align-items: center;
  justify-content: center;
  flex: none;
  width: ${p => p.$w}px;
`

const HeadRow = styled.span`
  display: flex;
  align-items: center;
  justify-content: space-between;
  padding-left: ${p => p.$pad || 0}px;
`

const ScrollColumn = styled.div`
  display: flex;
  flex-direction: column;
  align-items: center;
  width: ${p => p.$w || 17}px;
  background: #383838;
  border-left: 1px solid #1c1c1c;
`

const ScrollHead = styled.span`
  display: flex;
  align-items: center;
  justify-content: center;
  flex: none;
  width: 100%;
  height: ${p => p.$h || 19}px;
  color: #bbb;
  background: ${p => p.$bg || '#444'};
  border-bottom: 1px solid #111;
`

const ScrollThumb = styled.span`
  flex: ${p => p.$flex || 1};
  align-self: stretch;
  background: ${p => (p.$empty ? 'none' : 'linear-gradient(90deg, #454545, #3e3e3e)')};
  border: ${p => (p.$empty ? 0 : '1px solid #0e0e0e')};
`

const Up = ({fill = '#bbb', w = 9}) => (
  <svg width={w} height="6" viewBox="0 0 9 6" preserveAspectRatio="none"><path d="M0 6h9L4.500 0z" fill={fill} /></svg>
)

const PanelFooter = styled.div`
  display: flex;
  align-items: center;
  flex: none;
  height: 18px;
  padding-left: 1px;
  border-top: 1px solid #1c1c1c;
`

const HScroll = styled.div`
  display: flex;
  align-items: center;
  align-self: stretch;
  flex: 1;
  background: #373737;
  border-left: 1px solid #111;
`

const items = [
  {name: 'NBchart...s.png', icon: picture, color: '#a9a9c9', type: 'PNG 文件', size: '77 KB', on: true},
  {name: '固态层', icon: <FaFolder size={14} color="#b4b4b4" />, color: '#e0d848', type: '文件夹', open: true},
  {name: '合成  1', icon: compIcon, color: '#a89372', type: '合成', rate: '29.97'},
]

const ProjectPanel = () => (
  <ProjectColumn>
    <PanelScroller />
    <Panel $grow>
      <TabStrip>
        <Tab $on $w={48}><Grip /><TabButton>项目</TabButton><Close /></Tab>
        <Tab $w={233}>
          <Slot $w={24}><Swatch $c="#a9a9c9" /></Slot>
          <TabButton $fill>特效控制台 : <small>NBcharts-Maps.png</small></TabButton>
        </Tab>
        <TabEnd />
      </TabStrip>
      <Footage>
        <Thumb viewBox="0 0 64 61" preserveAspectRatio="none">
          <path d="M4 0h56v48H4z" fill="#000" />
          <path d="M0 48.500h64" stroke="#000" />
          <svg x="4" y="0" width="56" height="48" viewBox="135 140 520 294" preserveAspectRatio="none"><Land /></svg>
        </Thumb>
        <FootageInfo>
          <FootageText>
            <span>NBcharts-Maps.png ▾  被使用 1次</span>
            <span>868 x 743 (1.00)</span>
          </FootageText>
          <FootageText $size={12}>
            <span>数百万以上颜色（直通）</span>
            <span>非交错</span>
          </FootageText>
        </FootageInfo>
      </Footage>
      <Search label="搜索项目" arrow w={306} margin="0 7px" />
      <ListArea>
        <ListTableWrap>
          <ListTable>
            <colgroup><col /><col width="22" /><col width="76" /><col width="48" /><col width="38" /></colgroup>
            <thead>
              <tr>
                <th><HeadRow $pad={17}>名称<Up fill="#999" w={12} /></HeadRow></th>
                <th><FaTag size={13} color="#c4c4c4" /></th>
                <th>类型</th>
                <th>大小</th>
                <th>帧速率</th>
              </tr>
            </thead>
            <tbody>
              {items.map(it => (
                <ItemRow key={it.name} $on={it.on}>
                  <td>
                    <ItemName>
                      <Slot $w={16}>{it.open && <Side fill="#777" />}</Slot>
                      <Slot $w={17}>{it.icon}</Slot>
                      <ItemLabel $on={it.on}>{it.name}</ItemLabel>
                    </ItemName>
                  </td>
                  <td><Swatch as="div" $c={it.color} $s={11} $edge /></td>
                  <td>{it.type}</td>
                  <td>{it.size}</td>
                  <td>{it.rate}</td>
                </ItemRow>
              ))}
            </tbody>
          </ListTable>
        </ListTableWrap>
        <ScrollColumn>
          <ScrollHead />
          <ScrollHead><FaSitemap size={13} /></ScrollHead>
          <ScrollHead $bg="none"><Up fill="#666" /></ScrollHead>
          <ScrollThumb $empty />
          <ScrollHead $bg="none"><Down fill="#666" w={9} /></ScrollHead>
        </ScrollColumn>
      </ListArea>
      <PanelFooter>
        <IconButton $w={24} aria-label="解释素材">{glyphs.importer}</IconButton>
        <IconButton $w={24} aria-label="新建文件夹"><FaFolder size={14} /></IconButton>
        <IconButton $w={26} aria-label="新建合成">{glyphs.film}</IconButton>
        <IconButton $w={38}>8 bpc</IconButton>
        <IconButton $w={32} aria-label="删除"><FaTrashAlt size={12} color="#8a8a8a" /></IconButton>
        <HScroll>
          <Slot $w={18}><Side left /></Slot>
          <ScrollThumb $flex="0 0 39px" />
          <ScrollThumb $empty />
          <Slot $w={18}><Side /></Slot>
        </HScroll>
        <Slot $w={18} />
      </PanelFooter>
    </Panel>
  </ProjectColumn>
)

// ---------- composition panel ----------

const CompBar = styled.div`
  display: flex;
  align-items: center;
  justify-content: space-between;
  flex: none;
  height: 26px;
  padding: 0 5px 1px 20px;
  border-bottom: 1px solid #222;
  font-size: 12px;
`

const BoxButton = styled.button`
  height: 17px;
  padding: 0 8px;
  border: 1px solid #181818;
  box-shadow: 1px 1px 0 #555;
  background: ${p => (p.$dark ? '#303030' : raised)};
  font-size: ${p => p.$size || 12}px;
  color: #d0d0d0;
  white-space: pre;
`

const Cluster = styled.div`
  display: flex;
  align-items: center;
  gap: ${p => p.$gap || 0}px;
  padding-left: ${p => p.$pad || 0}px;
`

const Viewer = styled.div`
  display: grid;
  grid-template-columns: 110px minmax(0, 1fr) 144px;
  flex: 1;
  min-height: 0;
`

const CameraName = styled.span`
  padding: 6px 0 0 11px;
  font-size: 12px;
  color: #e6e6e6;
  text-shadow: 1px 1px #000;
`

const ViewerBar = styled.div`
  display: flex;
  align-items: center;
  flex: none;
  height: 22px;
  padding-left: 3px;
  gap: 3px;
  border-top: 1px solid #1c1c1c;
`

const BarSep = styled.span`
  width: 1px;
  height: 20px;
  background: #222;
`

const CompositionPanel = () => (
  <Panel>
    <TabStrip>
      <Tab $on $w={156} $gap={4}>
        <Grip /><Swatch $c="#a89372" />
        <FaUnlockAlt size={11} color="#b4b4b4" />
        <Drop label="合成" value="合成 : 合成  1" w={101} />
        <Close />
      </Tab>
      <TabEnd />
    </TabStrip>
    <CompBar>
      <BoxButton $dark>合成  1</BoxButton>
      <Cluster $gap={5}>渲染 :<BoxButton>经典 3D</BoxButton></Cluster>
    </CompBar>
    <Viewer>
      <CameraName>有效摄像机</CameraName>
      <Canvas />
    </Viewer>
    <ViewerBar>
      <IconButton $w={18} aria-label="始终预览">{glyphs.region}</IconButton>
      <Drop label="放大率" value="100 %" w={67} font={11} />
      <IconButton $w={18} aria-label="网格和参考线">{glyphs.guides}</IconButton>
      <IconButton $w={19} $on aria-label="显示遮罩">{glyphs.mask}</IconButton>
      <BoxButton $size={11}>0;00;00;00</BoxButton>
      <IconButton $w={18} aria-label="快照"><FaCamera size={13} /></IconButton>
      <IconButton $w={18} aria-label="显示快照"><FaUser size={12} color="#606060" /></IconButton>
      <IconButton $w={18} aria-label="通道">{glyphs.rgb}</IconButton>
      <Drop label="分辨率" value="(全分辨 ..." w={84} />
      <IconButton $w={19} aria-label="目标兴趣范围">{glyphs.inset}</IconButton>
      <IconButton $w={18} aria-label="透明栅格">{glyphs.checker}</IconButton>
      <Drop label="3D 视图" value="有效摄像机" w={104} />
      <Drop label="视图布局" value="1 视图" w={68} />
      <IconButton $w={18} aria-label="像素纵横比">{glyphs.ratio}</IconButton>
      <IconButton $w={19} $on aria-label="快速预览">{glyphs.bolt}</IconButton>
      <IconButton $w={18} aria-label="时间线">{glyphs.graph}</IconButton>
      <IconButton $w={18} aria-label="流程图"><FaSitemap size={13} /></IconButton>
      <BarSep />
      <IconButton $w={18} aria-label="曝光">{glyphs.shutter}</IconButton>
      <Value>+0.0</Value>
    </ViewerBar>
  </Panel>
)

// ---------- timeline ----------

const TimelineBody = styled.div`
  border: 1px solid ${gold};
`

const split = css`
  display: grid;
  grid-template-columns: 698px minmax(0, 1fr) 17px;
`

const ControlRow = styled.div`
  ${split}
  height: 36px;
  border-bottom: 1px solid #111;
`

const Controls = styled.div`
  display: flex;
  align-items: center;
`

const TimeCode = styled.div`
  display: flex;
  flex-direction: column;
  align-items: center;
  width: 104px;
  color: ${gold};
  font-size: 10px;
  line-height: 12px;

  button {
    font-size: 17px;
    line-height: 18px;
    font-weight: bold;
  }
`

const Ruler = styled.div`
  padding-top: 6px;
  border-left: 1px solid #222;
  overflow: hidden;
`

const NavBar = styled.div`
  display: flex;
  height: 9px;
  border: 1px solid #0c0c0c;
  border-radius: 6px 6px 0 0;
  margin-right: 6px;
  overflow: hidden;
  background: #545044;
`

const NavFill = styled.span`
  width: 66%;
  background: #7c7c7c;
`

const Handle = styled.span`
  flex: none;
  width: 7px;
  border: 1px solid #1c1500;
  background: linear-gradient(90deg, ${gold} 40%, #6c4d00 40% 60%, ${gold} 60%);
`

const Ticks = styled.div`
  display: grid;
  grid-template-columns: repeat(12, minmax(0, 1fr)) 3px;
  height: 20px;
  margin-left: 7px;
`

const Tick = styled.span`
  display: flex;
  flex-direction: column;
  align-items: center;
  width: 40px;
  margin-left: -20px;
  font-size: 10px;
  line-height: 14px;

  &::after {
    content: "";
    width: 1px;
    height: 5px;
    background: #aaa;
  }
`

const HeaderRow = styled.div`
  ${split}
  height: 19px;
  border-bottom: 1px solid #000;
`

const layerColumns = css`
  display: grid;
  grid-template-columns: 67px 33px 32px 130px 138px 74px 22px 69px 1fr;
  align-items: center;
`

const LayerHeader = styled.div`
  ${layerColumns}
  font-size: 10px;
  color: #a0a0a0;
  background: linear-gradient(#4a4a4a, #3e3e3e);
`

const HeadCell = styled.span`
  display: flex;
  align-items: center;
  height: 12px;
  padding-left: ${p => (p.$pad == null ? 5 : p.$pad)}px;
  border-right: ${p => (p.$line ? '1px solid #222' : 0)};
`

const WorkArea = styled.div`
  display: flex;
  background: linear-gradient(#777, #6c6c6c 14px, #111 14px 15px, #12c020 15px);
`

const Row = styled.div`
  ${split}
  height: ${p => p.$h || 19}px;
  background: ${p => (p.$layer ? '#4a4a4a' : '#404040')};
  border-bottom: 1px solid #383838;
`

const LayerCells = styled.div`
  ${layerColumns}
`

const Cell = styled.span`
  display: flex;
  align-items: center;
  min-width: 0;
  padding-left: ${p => p.$pad || 0}px;
  gap: ${p => p.$gap || 0}px;
`

const Toggle = styled.button`
  display: flex;
  align-items: center;
  justify-content: center;
  flex: none;
  width: 13px;
  height: 14px;
  margin: 0 1px;
  color: #c4c4c4;
  border: solid #2e2e2e;
  border-width: ${p => (p.$off ? 0 : '1px 0 0 1px')};
  box-shadow: ${p => (p.$off ? 'none' : '1px 1px 0 #707070')};
`

const LayerName = styled.span`
  flex: 1;
  min-width: 0;
  padding: 0 2px;
  white-space: pre;
  font-size: ${p => (p.$boxed ? 11 : 12)}px;
  line-height: 14px;
  color: #c4c4c4;
  border: ${p => (p.$boxed ? '2px solid #b4b4b4' : 0)};
`

const Track = styled.div`
  display: flex;
  align-items: center;
  padding-left: 7px;
  border-left: 1px solid #222;
  background: linear-gradient(90deg, #454545 7px, ${p => (p.$bar ? '#454545 7px' : '#626262 7px 17px, #4d4d4d 17px')});
`

const Bar = styled.div`
  flex: 1;
  height: 17px;
  background: ${p => p.$c};
`

const KeyMark = styled.svg`
  margin-left: -4px;
`

const PropCells = styled.div`
  display: grid;
  grid-template-columns: 262px 1fr;
  align-items: center;
`

const PropName = styled.span`
  display: flex;
  align-items: center;
  height: 18px;
  padding-left: ${p => (p.$group ? 86 : 106)}px;
  gap: ${p => (p.$group ? 3 : 6)}px;
  font-size: 12px;
`

const PropText = styled.span`
  flex: 1;
  padding-left: 4px;
  line-height: 18px;
  margin-left: ${p => (p.$group ? 0 : '-3px')};
  color: #d2d2d2;
  background: ${p => (p.$on ? '#666' : 'none')};
`

const PropValue = styled.span`
  display: flex;
  align-items: center;
  padding-left: 6px;
  color: ${gold};
  white-space: pre;
`

const Playhead = styled.div`
  position: absolute;
  top: 19px;
  bottom: 16px;
  left: 699px;
  display: flex;
  flex-direction: column;
  align-items: center;
  width: 15px;
  pointer-events: none;

  &::after {
    content: "";
    flex: 1;
    width: 1px;
    background: #f01010;
  }
`

const TimelineMain = styled.div`
  position: relative;
`

const SideScroll = styled.div`
  position: absolute;
  top: 55px;
  right: 0;
  bottom: 17px;
  display: flex;
  width: 16px;
`

const TimelineFooter = styled.div`
  ${split}
  height: 17px;
  border-top: 1px solid #111;
`

const ZoomRange = styled.input`
  appearance: none;
  width: 43px;
  height: 4px;
  margin: 0 11px;
  border: 1px solid #000;
  background: #222;

  &::-webkit-slider-thumb {
    appearance: none;
    width: 8px;
    height: 9px;
    background: #5c5c5c;
    border: 1px solid #111;
    border-radius: 4px 4px 0 0;
  }
`

const Mountains = ({w}) => (
  <svg width={w} height="8" viewBox="0 0 16 8"><path d="M0 8l4-5 2 2 3-5 3 4 1-1 3 5z" fill="#c0c0c0" /></svg>
)

// odd pieces of a value are editable, even ones are separators
const props = [
  {name: '定位点', value: ['', '434.0', ',', '371.5', ',', '0.0']},
  {name: '位置', value: ['', '386.0', ',', '295.5', ',', '0.0']},
  {name: '缩放', link: true, value: ['', '64.5', ',', '64.5', ',', '64.5', '%']},
  {name: '方向', value: ['', '0.0', ' ° ,', '0.0', ' ° ,', '0.0', ' °']},
  {name: 'X 轴旋转', on: true, value: ['', '0', 'x', '-55.0', ' °']},
  {name: 'Y 轴旋转', value: ['', '0', 'x', '+0.0', ' °']},
  {name: 'Z 轴旋转', value: ['', '0', 'x', '+0.0', ' °']},
  {name: '透明度', value: ['', '100', '%']},
]

const Key = ({on}) => (
  <KeyMark width="9" height="13" viewBox="0 0 9 13" fill="none">
    {on && <path d="M0 0h9v13H0z" fill={gold} />}
    <path d="M1 1.500h2.500v10H1M8 1.500H5.500v10H8" stroke={on ? '#5c4200' : '#e0e0e0'} />
  </KeyMark>
)

const Layer = ({n, color, name, icon, track, bar, open, h}) => (
  <Row $layer $h={h}>
    <LayerCells>
      <Cell $pad={4}>
        <Toggle $off aria-label="显示"><FaEye size={12} /></Toggle>
        <Slot $w={15} />
        <Toggle aria-label="独奏" /><Toggle aria-label="锁定" />
      </Cell>
      <Cell $pad={4} $gap={5}>
        <Slot $w={9}>{open ? <Down fill="#8c8c8c" /> : <Side fill="#8c8c8c" />}</Slot>
        <Swatch $c={color} $s={13} $edge />
      </Cell>
      <Cell $pad={6}>{n}</Cell>
      <Cell $pad={3} $gap={1}>{icon}<LayerName $boxed={open}>{name}</LayerName></Cell>
      <Cell $pad={4}>
        <Toggle aria-label="隐藏">{glyphs.shySmall}</Toggle>
        {open ? <Slot $w={15} /> : <Toggle aria-label="卷展" />}
        <Toggle aria-label="质量">{glyphs.slash}</Toggle>
        <Slot $w={30} />
        <Toggle aria-label="运动模糊" /><Toggle aria-label="调节层" />
        <Toggle aria-label="3D 图层">{open && <FaCube size={12} />}</Toggle>
      </Cell>
      <Cell $pad={3}><Drop label="模式" value="正常" w={68} h={16} /></Cell>
      <Cell $pad={3}><Toggle aria-label="保持透明" /></Cell>
      <Cell>{track && <Drop label="轨道蒙板" value="无" w={65} h={16} />}</Cell>
      <Cell $pad={5} $gap={6}>{glyphs.spiral}<Drop label="父级" value="无" w={89} h={16} /></Cell>
    </LayerCells>
    <Track $bar><Bar $c={bar} /></Track>
  </Row>
)

const Fx = styled.i`
  font: italic bold 12px "Liberation Serif", serif;
`

const MiniBlur = () => (
  <Svg s={13}><circle cx="7" cy="13" r="5" fill="#555" strokeWidth="1.500" /><circle cx="13" cy="7" r="6" fill="#aaa" stroke="#ddd" /></Svg>
)

const WatchIcon = () => (
  <svg width="12" height="13" viewBox="0 0 12 13" fill="none" stroke="#a8a8a8">
    <circle cx="6.500" cy="8" r="4" strokeWidth="1.500" /><path d="M6.500 4V1M4.500 1.500h4M.5 1.500l2 2.500H.5M9 4l1.500-1.500" />
  </svg>
)

const Timeline = () => (
  <Panel>
    <TabStrip>
      <Tab $on $active $w={75}><Grip /><Swatch $c="#a89372" /><TabButton>合成  1</TabButton><Close /></Tab>
      <Tab $w={77} $gap={0}><TabButton $fill>渲染队列</TabButton></Tab>
      <TabEnd flat />
    </TabStrip>
    <TimelineBody>
      <TimelineMain>
        <ControlRow>
          <Controls>
            <TimeCode><Value>0;00;00;00</Value>00000 (29.97 fps)</TimeCode>
            <Search label="搜索图层" arrow w={313} margin="0 9px 2px 1px" />
            <IconButton $w={28} aria-label="合成流程图">{glyphs.flow}</IconButton>
            <Slot $w={9} />
            <IconButton $w={24} $h={25} $on aria-label="实时更新">{glyphs.liveUpdate}</IconButton>
            <IconButton $w={28} aria-label="草稿 3D">{glyphs.draft}</IconButton>
            <Slot $w={7} />
            <IconButton $w={26} aria-label="隐藏图层">{glyphs.shy}</IconButton>
            <IconButton $w={26} aria-label="帧融合">{glyphs.blend}</IconButton>
            <IconButton $w={26} aria-label="运动模糊">{glyphs.blur}</IconButton>
            <Slot $w={6} />
            <IconButton $w={27} aria-label="头脑风暴">{glyphs.brain}</IconButton>
            <IconButton $w={26} aria-label="自动关键帧">{glyphs.watch}</IconButton>
            <IconButton $w={28} aria-label="曲线编辑器">{glyphs.curve}</IconButton>
          </Controls>
          <Ruler>
            <NavBar><Handle /><NavFill /><Handle /></NavBar>
            <Ticks>
              {['0:00f', '05f', '10f', '15f', '20f', '25f', '01:00f', '05f', '10f', '15f', '20f', '25f', '02:00f'].map((t, i) => (
                <Tick key={i}>{t}</Tick>
              ))}
            </Ticks>
          </Ruler>
        </ControlRow>
        <HeaderRow>
          <LayerHeader>
            <HeadCell $pad={4} $line>
              <Slot $w={15}><FaEye size={12} /></Slot><Slot $w={15}><FaVolumeUp size={12} /></Slot>
              <Slot $w={15}><Swatch $c="#bbb" $s={8} $round /></Slot><Slot $w={15}><FaLock size={10} /></Slot>
            </HeadCell>
            <HeadCell $pad={14} $line><FaTag size={13} color="#c4c4c4" /></HeadCell>
            <HeadCell $line>#</HeadCell>
            <HeadCell $line>源名称</HeadCell>
            <HeadCell $pad={4} $line>
              <Slot $w={15}>{glyphs.shySmall}</Slot><Slot $w={15}>{glyphs.sun}</Slot>
              <Slot $w={15}>{glyphs.quality}</Slot><Slot $w={15}><Fx>fx</Fx></Slot>
              <Slot $w={15}>{glyphs.frames}</Slot><Slot $w={15}><MiniBlur /></Slot>
              <Slot $w={15}>{glyphs.half}</Slot><Slot $w={15}><FaCube size={12} /></Slot>
            </HeadCell>
            <HeadCell>模式</HeadCell>
            <HeadCell $pad={7}>T</HeadCell>
            <HeadCell $pad={1} $line>轨道蒙板</HeadCell>
            <HeadCell>父级</HeadCell>
          </LayerHeader>
          <WorkArea><Handle /></WorkArea>
        </HeaderRow>
        <Layer n="1" open color="#a9a9c9" icon={picture} name="NBcharts-Maps.png"
          bar="linear-gradient(#aeaec2, #9c9cbc)" />
        <Row>
          <PropCells>
            <PropName $group><Slot $w={17}><Down fill="#8c8c8c" /></Slot><PropText $group>变换</PropText></PropName>
            <PropValue><Value $size={12}>重置</Value></PropValue>
          </PropCells>
          <Track><Key /></Track>
        </Row>
        {props.map(p => (
          <Row key={p.name}>
            <PropCells>
              <PropName>
                <Slot $w={15}>·</Slot>
                <WatchIcon />
                <PropText $on={p.on}>{p.name}</PropText>
              </PropName>
              <PropValue>
                {p.link && <Slot $w={17}>{glyphs.link}</Slot>}
                {p.value.map((v, i) => (i % 2 ? <Value key={i}>{v}</Value> : <span key={i}>{v}</span>))}
              </PropValue>
            </PropCells>
            <Track><Key on={p.on} /></Track>
          </Row>
        ))}
        <Row>
          <PropCells>
            <PropName $group><Slot $w={17}><Side fill="#8c8c8c" /></Slot><PropText $group>质感选项</PropText></PropName>
          </PropCells>
          <Track><Key /></Track>
        </Row>
        <Layer n="2" color="#b03a3a" track icon={<Swatch $c="#000" $s={16} />} name="黑色 固态层  1"
          bar="#853a3c" h={17} />
        <TimelineFooter>
          <Cluster $gap={2} $pad={3}>
            <IconButton $w={16} $h={15} $on aria-label="图层开关">{glyphs.layers}</IconButton>
            <IconButton $w={16} $h={15} $on aria-label="模式">{glyphs.modes}</IconButton>
            <IconButton $w={16} $h={15} aria-label="入出点">{glyphs.braces}</IconButton>
          </Cluster>
          <Cluster>
            <Slot $w={22}><Mountains w={9} /></Slot>
            <ZoomRange type="range" aria-label="缩放时间线" defaultValue="38" />
            <Mountains w={16} />
            <Slot $w={5} />
            <HScroll>
              <Slot $w={18}><Side left /></Slot>
              <ScrollThumb $flex={341} />
              <ScrollThumb $flex={175} $empty />
              <Slot $w={18}><Side /></Slot>
            </HScroll>
          </Cluster>
        </TimelineFooter>
        <Playhead>
          <svg width="11" height="14" viewBox="0 0 11 14"><path d="M0 0h11v8l-5 6L0 8z" fill="#e0a818" /><path d="M3 2v4M5.500 2v4M8 2v4" stroke="#6c4d00" /></svg>
        </Playhead>
        <Playline />
        <SideScroll>
          <ScrollColumn $w={16}>
            <ScrollHead $h={18} $bg="none" />
          </ScrollColumn>
        </SideScroll>
        <SideRail>
          <ScrollHead $bg="none">{glyphs.marker}</ScrollHead>
          <ScrollHead $h={18} $bg="none">{glyphs.shapes}</ScrollHead>
          <ScrollHead $h={20} $bg="none"><Up /></ScrollHead>
          <ScrollThumb />
          <ScrollHead $h={22} $bg="none"><Down w={9} /></ScrollHead>
        </SideRail>
      </TimelineMain>
    </TimelineBody>
  </Panel>
)

const Playline = styled.span`
  position: absolute;
  top: 7px;
  left: 706px;
  width: 1px;
  height: 12px;
  background: #f01010;
`

const SideRail = styled.div`
  position: absolute;
  top: 36px;
  right: 0;
  bottom: 17px;
  display: flex;
  flex-direction: column;
  width: 16px;
  background: #3c3c3c;
`

// ---------- right side panels ----------

const SideColumn = styled.div`
  display: flex;
  flex-direction: column;
  gap: 5px;
  min-height: 0;
`

const InfoBody = styled.div`
  display: flex;
  padding: 4px 8px 0;
`

const Readout = styled.p`
  margin: 0;
  line-height: 13px;
  white-space: pre;
`

const VLine = styled.span`
  width: 1px;
  height: 50px;
  margin: 4px 7px 0 30px;
  background: #222;
`

const InfoSwatch = styled(Swatch)`
  margin: 14px 6px 0 0;
`

const Cross = () => (
  <svg width="9" height="52" viewBox="0 0 9 52"><path d="M0 25.500h9M4.500 21v9" stroke="#c0c0c0" /></svg>
)

const Transport = styled.div`
  display: flex;
  align-items: center;
  justify-content: space-between;
  height: 27px;
  padding: 2px 5px 0 10px;
`

const Form = styled.div`
  display: grid;
  grid-template-columns: ${p => p.$cols};
  align-items: center;
  gap: ${p => p.$gap || '0 6px'};
  padding: ${p => p.$pad || '0 4px 0 7px'};
  height: ${p => p.$h || 22}px;
  font-size: ${p => p.$font || 12}px;
  white-space: nowrap;
`

const Check = styled.label`
  display: flex;
  align-items: center;
  gap: 5px;
  font-size: 12px;
  white-space: nowrap;

  input {
    appearance: none;
    flex: none;
    width: 12px;
    height: 12px;
    border: 1px solid #1c1c1c;
    box-shadow: 1px 1px 0 #5a5a5a;
    background: #4a4a4a;
  }
`

const transport = [
  ['第一帧', 'M1 1v9M12 1v9L4 5.500z'],
  ['上一帧', 'M8 1v9L1 5.500zM11 1v9'],
  ['播放', 'M2 1l9 4.500L2 10z'],
  ['下一帧', 'M1 1v9M4 1v9l8-4.500z'],
  ['最后帧', 'M1 1v9l8-4.500zM11 1v9'],
]

const TypeBody = styled.div`
  display: flex;
  height: 57px;
  padding: 9px 6px 0;
  gap: 5px;
`

const FontFields = styled.div`
  display: flex;
  flex-direction: column;
  gap: 7px;
  width: 120px;
`

const TypeTools = styled.div`
  display: flex;
  flex-direction: column;
  align-items: center;
  gap: 8px;
  width: 20px;
  color: #a8a8a8;
`

const TypeRow = styled.div`
  display: grid;
  grid-template-columns: 22px 46px 37px 29px 47px 1fr;
  align-items: center;
  height: ${p => p.$h || 22}px;
  padding: 0 6px;
  white-space: pre;
`

const Measure = styled.span`
  display: flex;
  align-items: center;
  gap: 3px;
`

const StyleRow = styled.div`
  display: flex;
  align-items: center;
  height: 30px;
  padding-left: 24px;
  gap: 3px;

  button {
    width: 24px;
    font: bold 14px "Liberation Serif", serif;
    color: #c8c8c8;
  }
  sup, sub, small { font-size: 9px; line-height: 1; }
`

// serif capitals with measuring arrows
const TypeSvg = styled.svg`
  overflow: visible;
  fill: #bcbcbc;
  stroke: none;
  text { font: bold ${p => p.$f || 17}px "Liberation Serif", serif; }
  path { stroke: #bcbcbc; fill: none; }
`

const typeIcons = {
  size: <TypeSvg width="17" height="16"><text x="5" y="14">T</text><path d="M0 6.500h6M3 6v8M1 13.500h4" opacity=".6" strokeWidth="1.500" /></TypeSvg>,
  leading: <TypeSvg $f={10} width="17" height="18"><text x="6" y="7">A</text><text x="6" y="17">A</text><path d="M5 8.500h11M2.500 9v8M0 9.500h5M0 17.500h5" /></TypeSvg>,
  kern: <TypeSvg $f={11} width="17" height="16"><text x="0" y="12">AV</text><path d="M4 1.500h6M8 15.500H3M11 3L4 14" /></TypeSvg>,
  track: <TypeSvg $f={11} width="17" height="18"><path d="M0 5h17" strokeWidth="10" opacity=".4" /><text x="1" y="9">AV</text><path d="M1 14.500h15M4 12l-3 2.500 3 2.500M13 12l3 2.500-3 2.500" /></TypeSvg>,
  stroke: <TypeSvg width="15" height="14"><path d="M0 1h15M0 6h15" strokeWidth="2" /><path d="M0 11.500h15" strokeWidth="4" /></TypeSvg>,
  vscale: <TypeSvg width="18" height="16"><text x="6" y="14">T</text><path d="M2.500 1v14M0 4l2.500-3L5 4M0 12l2.500 3L5 12" /></TypeSvg>,
  hscale: <TypeSvg width="17" height="17"><text x="3" y="11">T</text><path d="M1 14.500h15M4 12l-3 2.500 3 2.500M13 12l3 2.500-3 2.500" /></TypeSvg>,
  shift: <TypeSvg $f={11} width="15" height="14"><text x="0" y="12">A</text><text x="9" y="6">a</text><path d="M0 12.500h8M11.500 8v6M9 10l2.500-2 2.500 2" /></TypeSvg>,
  tsume: <TypeSvg width="17" height="16"><path d="M1.500 0v12M15.500 0v12" strokeDasharray="1 1" /><path d="M5 3h7M8 1v9c-5 2-4-4 1-4s4 4 1 5M0 14.500h5M12 14.500h5" /></TypeSvg>,
}

const TypeField = ({icon, value, unit, dim, size}) => (
  <>
    {typeIcons[icon]}
    <Measure><Value $dim={dim} $size={size}>{value}</Value>{unit}</Measure>
    <Down w={7} />
  </>
)

const AlignRow = styled.div`
  display: flex;
  align-items: center;
  height: 33px;
  padding: 0 7px;
  gap: 4px;

  button:nth-child(3n + 4) { margin-left: 5px; }
`

const IndentRow = styled.div`
  display: grid;
  grid-template-columns: 20px 52px 21px 45px 20px 1fr;
  align-items: center;
  height: 18px;
  padding: 0 8px 0 6px;
`

// start and end of each line of the paragraph
const align = {
  左对齐: [[0, 14], [0, 10], [0, 14], [0, 9], [0, 14], [0, 10]],
  居中: [[2, 12], [4, 10], [0, 14], [3, 11], [0, 14], [2, 12]],
  右对齐: [[0, 14], [4, 14], [0, 14], [5, 14], [0, 14], [4, 14]],
  末行左对齐: [[0, 14], [0, 14], [0, 14], [0, 14], [0, 14], [0, 10]],
  末行居中: [[0, 14], [0, 14], [0, 14], [0, 14], [0, 14], [2, 12]],
  末行右对齐: [[0, 14], [0, 14], [0, 14], [0, 14], [0, 14], [4, 14]],
  两端对齐: [[0, 14], [0, 14], [0, 14], [0, 14], [0, 14], [0, 14]],
}

const Lines = ({rows, w = 14, extra, x = 0}) => (
  <svg width={w} height="14" viewBox={`0 0 ${w} 14`} fill="none" stroke="#c0c0c0">
    <path d={rows.map(([a, b], i) => `M${a + x} ${i * 2.5 + .5}H${b + x}`).join('')} />
    {extra && <path d={extra} />}
  </svg>
)

const short = [[0, 10], [0, 7], [0, 10], [0, 7], [0, 10]]

const Px = () => <Measure><Value>0</Value>px</Measure>

const SidePanels = () => (
  <SideColumn>
    <Panel $h={144}>
      <TabStrip>
        <Tab $on $w={50}><Grip /><TabButton>信息</TabButton><Close /></Tab>
        <Tab $w={50}><TabButton $fill>音频</TabButton></Tab>
        <TabEnd />
      </TabStrip>
      <InfoBody>
        <InfoSwatch $c="#000" $s={19} />
        <Readout>{'R :  0\nG :  0\nB :  0\nA :  255'}</Readout>
        <VLine />
        <Cross />
        <Readout>{'  X : 507\n  Y :  503'}</Readout>
      </InfoBody>
      <Divider $m="6px 8px 0 6px" />
    </Panel>
    <Panel $h={132}>
      <TabStrip>
        <Tab $on $w={86}><Grip /><TabButton>预览控制台</TabButton><Close /></Tab>
        <TabEnd />
      </TabStrip>
      <Transport>
        {transport.map(([name, d]) => (
          <PlainButton key={name} aria-label={name}>
            <svg width="13" height="11" viewBox="0 0 13 11"><path d={d} fill="#c4c4c4" stroke="#c4c4c4" /></svg>
          </PlainButton>
        ))}
        <PlainButton aria-label="音频"><FaVolumeUp size={14} color="#b8b8b8" /></PlainButton>
        <PlainButton aria-label="循环">
          <svg width="15" height="12" viewBox="0 0 15 12" fill="none" stroke="#c0c0c0"><path d="M4 3.500H1v7h13V7M4 3.500h6" strokeWidth="1.800" /><path d="M9 0l5 3.500L9 7z" fill="#c0c0c0" stroke="none" /></svg>
        </PlainButton>
        <PlainButton aria-label="RAM 预演">
          <svg width="15" height="11" viewBox="0 0 15 11"><path d="M1 1v9M3.500 1v9M6 1v9" stroke="#b0b0b0" /><path d="M8 1v9l7-4.500z" fill="#c0c0c0" /></svg>
        </PlainButton>
      </Transport>
      <Divider $m="0 4px 0 6px" />
      <Form $cols="170px" $h={25}><Drop label="RAM 预演选项" value="RAM 预演选项" w={170} /></Form>
      <Form $cols="64px 41px 1fr" $h={17} $pad="0 4px 0 9px"><span>帧速率</span><span>跳过</span><span>分辨率</span></Form>
      <Form $cols="64px 41px 1fr" $h={20}>
        <Drop label="帧速率" value="(29.97)" w={64} light font={11} />
        <Drop label="跳过" value="0" w={41} light font={11} />
        <Drop label="分辨率" value="自动" />
      </Form>
      <Form $cols="117px 1fr" $h={22}>
        <Check><input type="checkbox" />从当前时间开始</Check>
        <Check><input type="checkbox" />全分辨率</Check>
      </Form>
    </Panel>
    <Panel $grow>
      <TabStrip>
        <Tab $w={87}><TabButton $fill>效果和预置</TabButton></Tab>
        <Tab $on $w={49}><Grip /><TabButton>文字</TabButton><Close /></Tab>
        <TabEnd />
      </TabStrip>
      <TypeBody>
        <FontFields>
          <Drop label="字体" value="Microsoft YaHei" w={120} light font={11} />
          <Drop label="字形" value="Bold" w={120} light font={11} />
        </FontFields>
        <TypeTools>
          <FaEyeDropper size={16} />
          <svg width="20" height="17"><path d="M0 0h20v17H0z" fill="#777" /><path d="M1 1h18v7H1z" fill="#000" /><path d="M1 9h18v7H1z" fill="#fff" /></svg>
        </TypeTools>
        <svg width="44" height="43" viewBox="0 0 44 43">
          <path d="M14 14h29v28H14z" fill="#fff" stroke="#111" /><path d="M24 24h10v9H24z" fill="#414141" stroke="#111" />
          <path d="M15 42L43 14" stroke="#d01020" strokeWidth="2" />
          <path d="M1 0h29v29H1z" fill="#e8e8e8" stroke="#111" />
          <path d="M1 33h9v9H1z" fill="#fff" /><path d="M1 42l9-9" stroke="#d01020" strokeWidth="2" />
          <path d="M34 3c5 0 6 2 6 6" fill="none" stroke="#bbb" strokeWidth="1.500" /><path d="M36 0v6l-4-3zM37 8h6l-3 4z" fill="#bbb" />
        </svg>
      </TypeBody>
      <Divider />
      <TypeRow><TypeField icon="size" value="50" unit="px" /><TypeField icon="leading" value="自动" size={12} /></TypeRow>
      <TypeRow><TypeField icon="kern" value="度" dim size={12} /><TypeField icon="track" value="0" /></TypeRow>
      <Divider $m="4px 6px 0" />
      <Form $cols="22px 46px 12px 1fr" $h={26} $pad="0 7px 0 6px" $gap="0" $font={11}>
        {typeIcons.stroke}<Measure><Value>-</Value>px</Measure><Down w={7} />
        <Drop label="描边方式" value="" />
      </Form>
      <Divider $m="3px 6px 0" />
      <TypeRow $h={24}><TypeField icon="vscale" value="100" unit="%" /><TypeField icon="hscale" value="100" unit="%" /></TypeRow>
      <TypeRow><TypeField icon="shift" value="0" unit="px" /><TypeField icon="tsume" value="0" unit="%" /></TypeRow>
      <Divider $m="4px 6px 0" />
      <StyleRow>
        <button>T</button><button><i>T</i></button><button>TT</button>
        <button>T<small>T</small></button><button>T<sup>1</sup></button><button>T<sub>1</sub></button>
      </StyleRow>
    </Panel>
    <Panel $h={319}>
      <TabStrip>
        <Tab $on $w={49}><Grip /><TabButton>段落</TabButton><Close /></Tab>
        <TabEnd />
      </TabStrip>
      <AlignRow>
        {Object.entries(align).map(([name, rows], i) => (
          <IconButton key={name} $w={21} $h={22} $on={i === 0} aria-label={name}><Lines rows={rows} /></IconButton>
        ))}
      </AlignRow>
      <Divider $m="0 18px 0 6px" />
      <IndentRow>
        <Lines w={17} rows={short} x={7} extra="M0 5.500h4M3 3l2 2.500L3 8M5.500 0v11" /><Px />
        <Lines w={17} rows={short} x={7} extra="M0 2.500h5M3 .5l2 2-2 2" /><Px />
        <Lines w={17} rows={short} x={7} extra="M0 2.500h5M3 .5l2 2-2 2" /><Px />
      </IndentRow>
      <IndentRow>
        <Lines w={17} rows={short} extra="M17 5.500h-4M14 3l-2 2.500L14 8M11.500 0v11" /><Px />
        <Lines w={17} rows={short} x={7} extra="M0 10.500h5M3 8.500l2 2-2 2" /><Px />
      </IndentRow>
    </Panel>
  </SideColumn>
)

const App = () => {
  return (
    <>
      <GlobalStyle />
      <Desktop>
        <Edge>
          <EdgeItem $h={24} $bg="#18b858" $round="12px 0 0 12px" $gap={1} />
          <EdgeItem $h={14} $bg="#bcc8d8" $gap={2} />
          <EdgeItem $h={24} $bg="#18804c" $round="12px 0 0 12px" $gap={60} />
          <EdgeItem $h={14} $bg="#bcc8d8" $gap={2} />
          <EdgeItem $h={13} $gap={3}>C</EdgeItem>
          <EdgeItem $gap={4}>C</EdgeItem>
          <EdgeItem $gap={66}>s</EdgeItem>
          <EdgeItem $gap={80}>te</EdgeItem>
          <EdgeItem $gap={80}>人</EdgeItem>
          <EdgeItem $h={38} $bg="#dcdcdc" $gap={36} />
          <EdgeItem $gap={8}>零</EdgeItem>
          <EdgeItem $gap={0}>B</EdgeItem>
          <EdgeItem $gap={63}>zr</EdgeItem>
          <EdgeItem $h={36} $bg="#e4d0d0" $gap={32} />
          <EdgeItem $gap={10}>小</EdgeItem>
          <EdgeItem $gap={82}>ew</EdgeItem>
          <EdgeItem $gap={78}>微</EdgeItem>
          <EdgeItem $gap={0}>20</EdgeItem>
          <EdgeItem $gap={65}>cr</EdgeItem>
        </Edge>
        <Window>
          <TitleBar>
            <AppBadge>Ae</AppBadge>
            Adobe After Effects - 未命名项目.aep *
            <WindowButtons>
              <PlainButton aria-label="最小化"><svg width="11" height="11"><path d="M0 5.500h11" stroke="#000" /></svg></PlainButton>
              <PlainButton aria-label="最大化"><svg width="11" height="11"><path d="M.5.5h10v10H.5z" stroke="#000" fill="none" /></svg></PlainButton>
              <PlainButton aria-label="关闭"><svg width="11" height="11"><path d="M0 0l11 11M11 0L0 11" stroke="#000" /></svg></PlainButton>
            </WindowButtons>
          </TitleBar>
          <MenuBar>
            {['文件(F)', '编辑(E)', '图像合成(C)', '图层(L)', '效果(T)', '动画(A)', '视图(V)', '窗口(W)', '帮助(H)'].map(m => (
              <button key={m}>{m}</button>
            ))}
          </MenuBar>
          <ToolbarRow />
          <Workspace>
            <MainColumn>
              <TopRow>
                <ProjectPanel />
                <CompositionPanel />
              </TopRow>
              <Timeline />
            </MainColumn>
            <SidePanels />
          </Workspace>
        </Window>
        <Edge>
          <EdgeItem $h={36} $bg="#e8cf8c" $gap={390} />
          <EdgeItem $gap={12}>m</EdgeItem>
          <EdgeItem $h={36} $bg="#e8cf8c" $gap={228} />
          <EdgeItem $gap={14}>p</EdgeItem>
          <EdgeItem $h={44} $bg="#0c9cdc" $round="4px 0 0 4px" $gap={125} />
          <EdgeItem $gap={7}>In</EdgeItem>
        </Edge>
        <EdgeBottom>
          <span /><span>2021052</span><span>png</span><span>文章</span><span>激活 Windows</span>
        </EdgeBottom>
      </Desktop>
    </>
  )
}

export default App
